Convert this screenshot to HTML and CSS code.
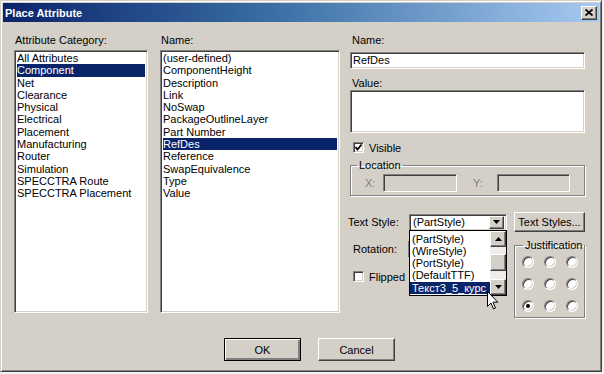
FILE: index.html
```html
<!DOCTYPE html>
<html lang="en">

<head>
    <meta charset="UTF-8">
    <meta name="viewport" content="width=device-width, initial-scale=1.0">
    <title>Place Attribute</title>
    <link rel="stylesheet" href="styles.css">
</head>

<body>
    <div class="dialog">
        <!-- Title bar -->
        <div class="titlebar">
            <span class="title">Place Attribute</span>
            <button class="close-btn">
                <svg width="8" height="7" viewBox="0 0 8 7"><path d="M0.5 0.5 L7.5 6.5 M7.5 0.5 L0.5 6.5" stroke="#000" stroke-width="1.8"/></svg>
            </button>
        </div>

        <div class="dialog-body">
            <div class="columns">
                <!-- Attribute Category list -->
                <div class="col col-category">
                    <div class="caption">Attribute Category:</div>
                    <ul class="listbox">
                        <li>All Attributes</li>
                        <li class="selected">Component</li>
                        <li>Net</li>
                        <li>Clearance</li>
                        <li>Physical</li>
                        <li>Electrical</li>
                        <li>Placement</li>
                        <li>Manufacturing</li>
                        <li>Router</li>
                        <li>Simulation</li>
                        <li>SPECCTRA Route</li>
                        <li>SPECCTRA Placement</li>
                    </ul>
                </div>

                <!-- Name list -->
                <div class="col col-name">
                    <div class="caption">Name:</div>
                    <ul class="listbox">
                        <li>(user-defined)</li>
                        <li>ComponentHeight</li>
                        <li>Description</li>
                        <li>Link</li>
                        <li>NoSwap</li>
                        <li>PackageOutlineLayer</li>
                        <li>Part Number</li>
                        <li class="selected">RefDes</li>
                        <li>Reference</li>
                        <li>SwapEquivalence</li>
                        <li>Type</li>
                        <li>Value</li>
                    </ul>
                </div>

                <!-- Properties -->
                <div class="col col-props">
                    <div class="caption">Name:</div>
                    <div class="field name-field">RefDes</div>
                    <div class="caption value-caption">Value:</div>
                    <div class="field value-field"></div>

                    <div class="check-row visible-row">
                        <span class="checkbox">
                            <svg width="9" height="9" viewBox="0 0 9 9"><path d="M1.5 4 L3.5 6.5 L7.5 1.5" fill="none" stroke="#000" stroke-width="1.8"/></svg>
                        </span>
                        <span>Visible</span>
                    </div>

                    <fieldset class="groupbox location">
                        <legend>Location</legend>
                        <div class="loc-row">
                            <span class="loc-label x-label">X:</span>
                            <div class="field loc-field"></div>
                            <span class="loc-label y-label">Y:</span>
                            <div class="field loc-field y-field"></div>
                        </div>
                    </fieldset>

                    <div class="lower">
                        <div class="style-col">
                            <div class="style-row">
                                <span class="style-label">Text Style:</span>
                                <div class="combo">
                                    <span class="combo-text">(PartStyle)</span>
                                    <span class="combo-btn">
                                        <svg width="7" height="4" viewBox="0 0 7 4"><path d="M0 0 H7 L3.5 4 Z" fill="#000"/></svg>
                                    </span>

                                    <!-- open dropdown -->
                                    <div class="dropdown">
                                        <ul class="dropdown-list">
                                            <li>(PartStyle)</li>
                                            <li>(WireStyle)</li>
                                            <li>(PortStyle)</li>
                                            <li>(DefaultTTF)</li>
                                            <li class="selected">Текст3_5_курс</li>
                                        </ul>
                                        <div class="scrollbar">
                                            <span class="scroll-btn">
                                                <svg width="7" height="4" viewBox="0 0 7 4"><path d="M0 4 H7 L3.5 0 Z" fill="#000"/></svg>
                                            </span>
                                            <span class="track track-top"></span>
                                            <span class="thumb"></span>
                                            <span class="track track-bottom"></span>
                                            <span class="scroll-btn">
                                                <svg width="7" height="4" viewBox="0 0 7 4"><path d="M0 0 H7 L3.5 4 Z" fill="#000"/></svg>
                                            </span>
                                        </div>
                                        <svg class="cursor" width="12" height="19" viewBox="0 0 12 19"><path d="M0.5 0.5 V15.5 L4 12 L6.5 18 L8.5 17 L6 11.2 H10.8 Z" fill="#fff" stroke="#000" stroke-width="1"/></svg>
                                    </div>
                                </div>
                            </div>

                            <div class="style-row rotation-row">
                                <span class="style-label">Rotation:</span>
                                <div class="combo rotation-combo"></div>
                            </div>

                            <div class="check-row flipped-row">
                                <span class="checkbox"></span>
                                <span>Flipped</span>
                            </div>
                        </div>

                        <div class="just-col">
                            <button class="btn text-styles-btn">Text Styles...</button>
                            <fieldset class="groupbox justification">
                                <legend>Justification</legend>
                                <div class="radio-grid">
                                    <span class="radio"></span>
                                    <span class="radio"></span>
                                    <span class="radio"></span>
                                    <span class="radio"></span>
                                    <span class="radio"></span>
                                    <span class="radio"></span>
                                    <span class="radio checked"></span>
                                    <span class="radio"></span>
                                    <span class="radio"></span>
                                </div>
                            </fieldset>
                        </div>
                    </div>
                </div>
            </div>

            <!-- Dialog buttons -->
            <div class="button-row">
                <button class="btn default-btn">OK</button>
                <button class="btn">Cancel</button>
            </div>
        </div>
    </div>
</body>

</html>
```

FILE: styles.css
```css
* {
    margin: 0;
    padding: 0;
    box-sizing: border-box;
}

body {
    font-family: 'Liberation Sans', Arial, sans-serif;
    font-size: 11px;
    color: #000;
    background-color: #f3f2f2;
    overflow: hidden;
}

.dialog {
    width: 602px;
    height: 372px;
    padding: 2px;
    background-color: #d4d0c8;
    border: 1px solid;
    border-color: #d4d0c8 #404040 #404040 #d4d0c8;
    box-shadow: inset 1px 1px #fff, inset -1px -1px #808080;
}

/* Title bar */
.titlebar {
    height: 19px;
    display: flex;
    align-items: center;
    justify-content: space-between;
    padding: 0 2px 0 2px;
    background: linear-gradient(90deg, #0a246a, #3a6ea5 45%, #a6caf0);
}

.title {
    color: #fff;
    font-weight: bold;
    font-size: 11px;
}

.close-btn {
    width: 16px;
    height: 14px;
    display: flex;
    align-items: center;
    justify-content: center;
    background-color: #d4d0c8;
    border: 1px solid;
    border-color: #fff #404040 #404040 #fff;
    box-shadow: inset -1px -1px #808080;
}

.dialog-body {
    padding: 12px 14px 0 11px;
}

.columns {
    display: flex;
    height: 279px;
}

.col-category {
    width: 134px;
    margin-right: 12px;
}

.col-name {
    width: 180px;
    margin-right: 10px;
}

.col-props {
    width: 235px;
}

.caption {
    line-height: 12px;
    height: 12px;
    padding-left: 1px;
    margin-bottom: 4px;
    white-space: nowrap;
}

/* Sunken fields */
.listbox,
.field,
.combo {
    background-color: #fff;
    border: 1px solid;
    border-color: #808080 #fff #fff #808080;
    box-shadow: inset 1px 1px #404040, inset -1px -1px #d4d0c8;
}

.listbox {
    height: 263px;
    list-style: none;
    padding: 1px 2px 0 2px;
}

.listbox li {
    line-height: 12.3px;
    height: 12.3px;
    white-space: nowrap;
}

.listbox li.selected,
.dropdown-list li.selected {
    background-color: #0a246a;
    color: #fff;
}

.col-props .caption {
    padding-left: 2px;
    margin-bottom: 6px;
}

.name-field {
    height: 17px;
    line-height: 15px;
    padding-left: 2px;
}

.col-props .value-caption {
    margin-top: 8px;
    margin-bottom: 1px;
}

.value-field {
    height: 43px;
}

/* Check boxes */
.check-row {
    display: flex;
    align-items: center;
    height: 13px;
}

.visible-row {
    margin-top: 8px;
    padding-left: 3px;
}

.checkbox {
    width: 11px;
    height: 11px;
    margin-right: 5px;
    display: flex;
    align-items: center;
    justify-content: center;
    background-color: #fff;
    border: 1px solid;
    border-color: #808080 #fff #fff #808080;
    box-shadow: inset 1px 1px #404040, inset -1px -1px #d4d0c8;
}

/* Group boxes */
.groupbox {
    border: 1px solid #808080;
    box-shadow: inset 1px 1px #fff, 1px 1px #fff;
}

.groupbox legend {
    margin-left: 6px;
    padding: 0 2px;
    line-height: 12px;
}

.location {
    margin-top: 5px;
    padding: 3px 0 3px 0;
}

.loc-row {
    display: flex;
    align-items: center;
}

.loc-label {
    color: #808080;
}

.x-label {
    margin-left: 14px;
    width: 18px;
}

.y-label {
    margin-left: 16px;
    width: 24px;
}

.loc-field {
    width: 74px;
    height: 18px;
    background-color: #d4d0c8;
}

.y-field {
    width: 73px;
}

/* Text style area */
.lower {
    display: flex;
    margin-top: 16px;
}

.style-col {
    width: 157px;
    margin-right: 7px;
}

.style-row {
    display: flex;
    align-items: center;
    height: 20px;
}

.style-label {
    width: 61px;
    margin-left: -2px;
}

.combo {
    position: relative;
    width: 98px;
    height: 17px;
    display: flex;
    align-items: center;
    padding: 2px 2px 2px 3px;
}

.combo-text {
    flex: 1;
}

.combo-btn,
.scroll-btn {
    width: 16px;
    height: 13px;
    display: flex;
    align-items: center;
    justify-content: center;
    background-color: #d4d0c8;
    border: 1px solid;
    border-color: #fff #404040 #404040 #fff;
    box-shadow: inset -1px -1px #808080;
}

.combo-btn {
    width: 15px;
}

.rotation-row {
    margin-top: 7px;
}

.rotation-row .style-label {
    margin-left: 3px;
    width: 55px;
}

.rotation-combo {
    width: 99px;
}

.flipped-row {
    margin-top: 11px;
    padding-left: 3px;
}

/* Open dropdown list */
.dropdown {
    position: absolute;
    top: 15px;
    left: -1px;
    width: 98px;
    height: 66px;
    display: flex;
    background-color: #fff;
    border: 1px solid #000;
    z-index: 10;
}

.dropdown-list {
    flex: 1;
    min-width: 0;
    list-style: none;
    padding-top: 2px;
}

.dropdown-list li {
    height: 12.3px;
    line-height: 12.3px;
    padding-left: 2px;
    white-space: nowrap;
    overflow: hidden;
    text-overflow: clip;
}

.scrollbar {
    width: 16px;
    display: flex;
    flex-direction: column;
}

.scrollbar .scroll-btn {
    height: 16px;
}

.track {
    background-color: #eeede9;
}

.track-top {
    height: 7px;
}

.track-bottom {
    height: 8px;
}

.thumb {
    height: 17px;
    background-color: #d4d0c8;
    border: 1px solid;
    border-color: #fff #404040 #404040 #fff;
    box-shadow: inset -1px -1px #808080;
}

.cursor {
    position: absolute;
    left: 77px;
    top: 60px;
}

/* Justification */
.just-col {
    width: 71px;
}

.btn {
    font-family: inherit;
    font-size: 11px;
    color: #000;
    background-color: #d4d0c8;
    border: 1px solid;
    border-color: #fff #404040 #404040 #fff;
    box-shadow: inset -1px -1px #808080;
}

.text-styles-btn {
    width: 71px;
    height: 20px;
}

.justification {
    margin-top: 7px;
    height: 79px;
    padding: 0 0 0 2px;
}

.radio-grid {
    display: grid;
    grid-template-columns: repeat(3, 22px);
    grid-template-rows: repeat(3, 22px);
    place-items: center;
}

.radio {
    width: 12px;
    height: 12px;
    border-radius: 50%;
    background-color: #fff;
    border: 1px solid;
    border-color: #808080 #fff #fff #808080;
    box-shadow: inset 1px 1px #404040, inset -1px -1px #d4d0c8;
    display: flex;
    align-items: center;
    justify-content: center;
}

.radio.checked::after {
    content: '';
    width: 4px;
    height: 4px;
    border-radius: 50%;
    background-color: #000;
}

/* OK / Cancel */
.button-row {
    display: flex;
    justify-content: center;
    gap: 17px;
    margin-top: 25px;
    padding-left: 20px;
}

.button-row .btn {
    width: 77px;
    height: 23px;
}

.default-btn {
    outline: 1px solid #000;
    outline-offset: -1px;
    border-color: #000;
    box-shadow: inset 1px 1px #fff, inset -2px -2px #808080;
}
```
